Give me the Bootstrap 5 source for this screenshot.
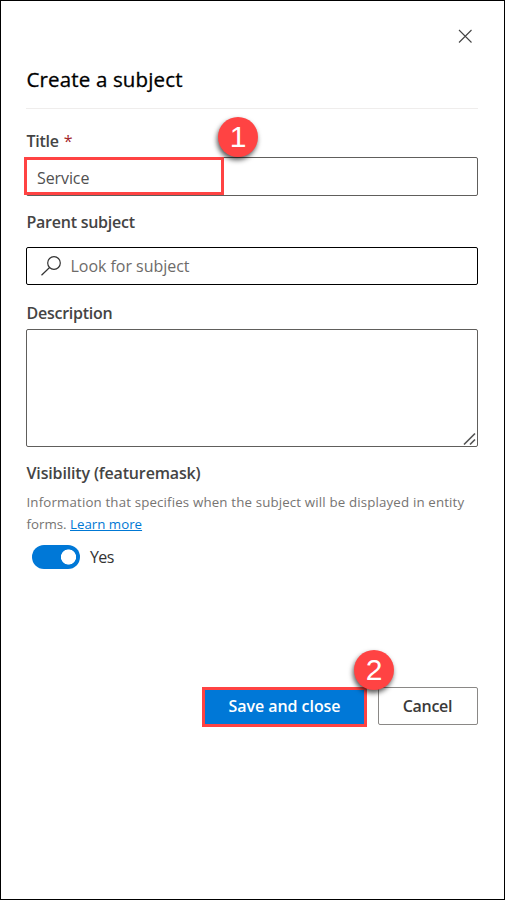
<!DOCTYPE html>
<html lang="en">
<head>
<meta charset="utf-8">
<meta name="viewport" content="width=device-width, initial-scale=1">
<title>Create a subject</title>
<link href="https://cdn.jsdelivr.net/npm/bootstrap@5.3.0/dist/css/bootstrap.min.css" rel="stylesheet">
<style>
body{font-family:"Segoe UI","Open Sans","Noto Sans",sans-serif;color:#333;background:#fff}
.panel{height:900px;border:1px solid #000;padding:25px 26px 0 25px;overflow:hidden}
.close-icon{width:22px;height:22px;margin-right:2px;margin-top:-1px;margin-bottom:1px}
.panel-title{font-size:20.5px;line-height:28px;font-weight:500;color:#000;margin:17px 0 0;padding-left:.5px;letter-spacing:.15px;-webkit-text-stroke:.3px #000}
.rule{height:1px;background:#efedec;margin-top:15px}
.field-label{font-size:16px;line-height:22px;font-weight:600;display:block;white-space:nowrap;color:#444;letter-spacing:-.25px;padding-left:.5px}
.field-label.title-label{margin-top:21px}
.req{color:#a4262c;font-weight:400;margin-left:1px}
.form-control.field{border:1px solid #605e5c;border-radius:2px;height:39px;padding:3px 10px 0;font-size:16px;color:#505050;letter-spacing:-.1px;box-shadow:none}
.mark-red{left:-2px;top:0;width:200px;height:38px;border:3px solid #ff4343;pointer-events:none}
.step{width:40px;height:40px;background:#ff4343;color:#fff;font:30px/40px "Liberation Sans",Arial,sans-serif;box-shadow:-1px 3px 5px rgba(0,0,0,.65)}
.step-one{left:192px;top:-40px}
.step-two{left:152px;top:-37px}
.lookup{height:38px;border:1px solid #000;border-radius:2px;font-size:16px;color:#6d6b69;padding-left:13px;letter-spacing:-.03px}
.lookup svg{width:22px;height:22px;margin-right:8.5px}
.form-control.area{height:118px;resize:none;border:1px solid #605e5c;border-radius:2px}
.grip{right:1px;bottom:1px;width:14px;height:14px}
.hint{font-size:13.3px;line-height:22px;color:#767472;white-space:nowrap;padding-left:.5px}
.hint-line{letter-spacing:.15px}
.hint a{color:#0078d4}
.form-check-input.toggle{width:48px;height:24px;margin:0 10px 0 6px;background-color:#0078d7;border:0;
background-image:radial-gradient(circle at 36.5px 12px,#fff 7.2px,transparent 7.9px)!important;background-size:100% 100%}
.form-check-input.toggle:checked{background-color:#0078d7}
.toggle-text{font-size:16px;line-height:24px;letter-spacing:-.6px}
.actions{margin-top:118px;gap:11px}
.btn.save{width:165px;height:40px;border:3px solid #ff4343;border-radius:0;background:#0078d7;color:#fff;font-size:16px;font-weight:600;padding:0 0 2px;line-height:32px;letter-spacing:-.05px}
.btn.cancel{width:100px;height:38px;border:1px solid #8a8886;border-radius:2px;background:#fff;color:#3b3a39;font-size:16px;font-weight:600;padding:0 1px 0 0;line-height:36px;letter-spacing:-.3px}
.title-field{margin-top:5px}
.parent-label{margin-top:15px;margin-bottom:14px}
.desc-label{margin-top:17px;margin-bottom:5px}
.visibility-label{margin-top:15px;margin-bottom:7px;letter-spacing:-.15px}
.toggle-row{margin-top:10px}
</style>
</head>
<body>
<main class="panel">
  <div class="d-flex justify-content-end">
    <svg class="close-icon" viewBox="0 0 22 22" role="img" aria-label="Close" fill="none" stroke="#444" stroke-width="1.1"><path d="M5 5l12.5 12.5M17.5 5L5 17.5"/></svg>
  </div>
  <h1 class="panel-title">Create a subject</h1>
  <div class="rule"></div>

  <label class="field-label title-label" for="t">Title <span class="req">*</span></label>
  <div class="position-relative title-field">
    <input id="t" class="form-control field" value="Service">
    <div class="position-absolute mark-red"></div>
    <div class="position-absolute rounded-circle text-center step step-one">1</div>
  </div>

  <span class="field-label parent-label">Parent subject</span>
  <div class="d-flex align-items-center lookup">
    <svg viewBox="0 0 22 22" fill="none" stroke="#333" stroke-width="1.2"><circle cx="14" cy="8" r="6.3"/><path d="M9.6 12.5L1.5 20.2"/></svg>
    <span>Look for subject</span>
  </div>

  <label class="field-label desc-label" for="d">Description</label>
  <div class="position-relative">
    <textarea id="d" class="form-control area d-block"></textarea>
    <svg class="position-absolute grip" viewBox="0 0 14 14" fill="none" stroke="#555" stroke-width="1.7"><path d="M1 12.5L12 1.5M7 12.5L12 7.5"/></svg>
  </div>

  <span class="field-label visibility-label">Visibility (featuremask)</span>
  <div class="hint"><span class="hint-line">Information that specifies when the subject will be displayed in entity</span><br>forms. <a href="#">Learn more</a></div>
  <div class="d-flex align-items-center form-switch p-0 toggle-row">
    <input class="form-check-input toggle float-none" type="checkbox" role="switch" aria-label="Visibility" checked>
    <span class="toggle-text">Yes</span>
  </div>

  <div class="d-flex justify-content-end align-items-start actions">
    <div class="position-relative">
      <button class="btn save d-block" type="button">Save and close</button>
      <div class="position-absolute rounded-circle text-center step step-two">2</div>
    </div>
    <button class="btn cancel" type="button">Cancel</button>
  </div>
</main>
<script src="https://cdn.jsdelivr.net/npm/bootstrap@5.3.0/dist/js/bootstrap.bundle.min.js"></script>
</body>
</html>
